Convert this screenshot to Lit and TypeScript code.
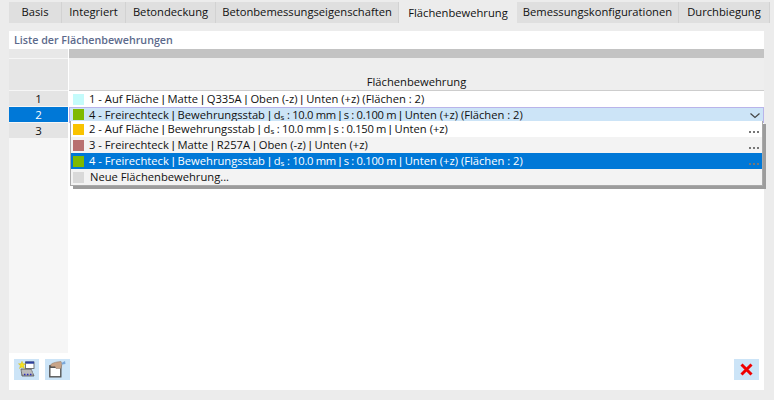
import { LitElement, html, css } from "lit";
import { customElement } from "lit/decorators.js";

const fmt = (s: string): unknown[] =>
  s.split(/( : 10\.0 mm \| s : 0\.1\d0 m )/).map((chunk, i) =>
    i % 2
      ? html`<span class="tight">${bars(chunk)}</span>`
      : bars(chunk)
  );
const bars = (s: string) =>
  s.split(/(\||ds)/).map((p) =>
    p === "|" ? html`<span class="bar">|</span>` : p === "ds" ? html`d<span class="sub">s</span>` : p
  );

@customElement("app-root")
export class AppRoot extends LitElement {
  static styles = css`
    :host { display: block; width: 774px; height: 400px; background: #ececec; overflow: hidden;
      font-family: "Open Sans", "Noto Sans", sans-serif; font-size: 11.2px; color: #111; position: relative; }
    .tabs { display: flex; height: 23px; padding: 0 0 0 9px; align-items: flex-end; }
    .tab { height: 21px; line-height: 19px; background: #dfdfdf; text-align: center; border-right: 1px solid #d2d2d2; box-sizing: border-box; white-space: nowrap; }
    .tab.active { height: 23px; line-height: 25px; background: #ececec; border-right: 0; }
    .panel { margin: 8px 10px 0 9px; height: 359px; background: #fff; display: flex; flex-direction: column; }
    .title { height: 18px; line-height: 18px; padding-left: 5px; color: #5c6a8c; font-weight: 600; font-size: 10.7px; }
    .grid { height: 309px; display: grid; grid-template-columns: 59px 1fr; column-gap: 1px; }
    .left { background: #f6f6f6; display: flex; flex-direction: column; }
    .lband { height: 9px; background: #e8e8e8; margin-bottom: 1px; }
    .lhead { height: 31px; background: #e6e6e6; margin-bottom: 1px; }
    .num { height: 15px; line-height: 15px; margin-bottom: 1px; background: #e4e4e4; text-align: center; font-size: 11.5px; }
    .num.sel { background: #0078d7; color: #fff; }
    .right { display: flex; flex-direction: column; position: relative; }
    .band { height: 9px; background: #c3c3c3; }
    .head { height: 33px; box-sizing: border-box; background: #eeeeee; border-bottom: 1px solid #cdcdcd; display: flex; align-items: flex-end; justify-content: center; line-height: 16px; }
    .row { height: 16px; display: flex; align-items: center; white-space: pre; position: relative; }
    .row.current { box-sizing: border-box; background: #cce4f7; border: 1px solid #b9b4ea; border-width: 1px 1px 0 1px; padding-left: 3px; }
    .row.current .txt { padding-bottom: 1px; }
    .row.current .swatch { margin-bottom: 2px; }
    .r1 { padding-left: 4px; }
    .txt { line-height: 14px; }
    .swatch { width: 11px; height: 11px; margin-right: 5px; flex: none; }
    .chev { position: absolute; right: 3px; top: 4px; width: 10px; height: 7px; }
    .drop { position: absolute; left: 1px; top: 72px; width: 693px; box-sizing: border-box; background: #f3f3f3; border: 1px solid #a9a9a9; border-top: 0;
      box-shadow: 3px 3px 0 #9c9c9c; }
    .item { height: 16px; display: flex; align-items: center; padding-left: 2px; white-space: pre; position: relative; }
    .item.white { background: #fff; }
    .item.sel { background: #0078d7; color: #fff; }
    .item.neu .swatch { margin-right: 6px; }
    .dots { position: absolute; right: 3px; top: 10px; width: 10px; height: 2px;
      background: repeating-linear-gradient(90deg, #777 0 2px, transparent 2px 4px); }
    .bar { font-family: "Liberation Sans", sans-serif; }
    .tight { letter-spacing: -0.3px; }
    .sub { font-size: 8px; line-height: 8px; position: relative; top: 1px; }
    .tools { height: 32px; display: flex; align-items: flex-start; padding: 6px 5px 0 5px; gap: 6px; }
    .btn { width: 25px; height: 21px; background: #cce4f7; display: flex; align-items: center; justify-content: center; }
    .btn.del { margin-left: auto; }
    svg { display: block; }
  `;

  private swatch(c: string) {
    return html`<span class="swatch" style="background:${c}"></span>`;
  }

  render() {
    const tabs: [string, number, boolean][] = [
      ["Basis", 53, false], ["Integriert", 64, false], ["Betondeckung", 90, false],
      ["Betonbemessungseigenschaften", 183, false], ["Flächenbewehrung", 118, true],
      ["Bemessungskonfigurationen", 162, false], ["Durchbiegung", 91, false],
    ];
    return html`
      <div class="tabs">
        ${tabs.map(([t, w, a]) => html`<div class="tab ${a ? "active" : ""}" style="width:${w}px">${t}</div>`)}
      </div>
      <div class="panel">
        <div class="title">Liste der Flächenbewehrungen</div>
        <div class="grid">
          <div class="left">
            <div class="lband"></div>
            <div class="lhead"></div>
            <div class="num">1</div>
            <div class="num sel">2</div>
            <div class="num">3</div>
          </div>
          <div class="right">
            <div class="band"></div>
            <div class="head">Flächenbewehrung</div>
            <div class="row r1">${this.swatch("#c4fbfb")}<span class="txt">${fmt("1 - Auf Fläche | Matte | Q335A | Oben (-z) | Unten (+z) (Flächen : 2)")}</span></div>
            <div class="row current">${this.swatch("#7fba00")}<span class="txt">${fmt("4 - Freirechteck | Bewehrungsstab | ds : 10.0 mm | s : 0.100 m | Unten (+z) (Flächen : 2)")}</span>
              <svg class="chev" viewBox="0 0 10 7"><path d="M0.5 1.5 L5 5.5 L9.5 1.5" fill="none" stroke="#444" stroke-width="1.2"/></svg>
            </div>
            <div class="drop">
              <div class="item white">${this.swatch("#f9c300")}<span class="txt">${fmt("2 - Auf Fläche | Bewehrungsstab | ds : 10.0 mm | s : 0.150 m | Unten (+z)")}</span><span class="dots"></span></div>
              <div class="item">${this.swatch("#b87070")}<span class="txt">${fmt("3 - Freirechteck | Matte | R257A | Oben (-z) | Unten (+z)")}</span><span class="dots"></span></div>
              <div class="item sel">${this.swatch("#7fba00")}<span class="txt">${fmt("4 - Freirechteck | Bewehrungsstab | ds : 10.0 mm | s : 0.100 m | Unten (+z) (Flächen : 2)")}</span><span class="dots"></span></div>
              <div class="item neu">${this.swatch("#d9d9d9")}<span class="txt">Neue Flächenbewehrung...</span></div>
            </div>
          </div>
        </div>
        <div class="tools">
          <div class="btn">
            <svg width="17" height="17" viewBox="0 0 17 17">
              <path d="M3 8 L13 8 L16 15 L4 15 Z" fill="#a8a8a8" stroke="#555" stroke-width=".8"/>
              <path d="M3.5 10 L14 10 M3.8 12 L15 12" stroke="#d8d8d8" stroke-width=".8"/>
              <path d="M6 13.5h1.4M9 13.5h1.4M12 13.5h1.4" stroke="#2a2ac0" stroke-width="1.4"/>
              <rect x="7.5" y="1" width="8.5" height="6.5" fill="#fff" stroke="#555" stroke-width=".8"/>
              <rect x="7.5" y="0.5" width="8.5" height="2.2" fill="#2b3f9c"/>
              <path d="M4 0.3 L5 2.8 L7.5 2.8 L5.6 4.6 L6.5 7.5 L4 5.9 L1.5 7.5 L2.4 4.6 L0.5 2.8 L3 2.8 Z" fill="#f6e21e" stroke="#c9b100" stroke-width=".4"/>
            </svg>
          </div>
          <div class="btn">
            <svg width="17" height="17" viewBox="0 0 17 17">
              <rect x="0.8" y="4.8" width="11" height="11" fill="#fff" stroke="#555" stroke-width="1.4"/>
              <rect x="0.8" y="4.8" width="11" height="2.2" fill="#555"/>
              <path d="M1.5 4 C2.5 2 6 1.5 8 1 L12 0.5 L13 3 L12 7.5 L7 7.5 L6 5.5 L2.5 5.5 Z" fill="#c8a488" stroke="#8e7766" stroke-width=".5"/>
              <path d="M12.5 2 L16 0 L16.5 3 L13 3.5 Z" fill="#7aa6d8"/>
            </svg>
          </div>
          <div class="btn del">
            <svg width="13" height="13" viewBox="0 0 13 13"><path d="M1.5 1.5 L11.5 11.5 M11.5 1.5 L1.5 11.5" stroke="#f00000" stroke-width="3" fill="none"/></svg>
          </div>
        </div>
      </div>
    `;
  }
}
